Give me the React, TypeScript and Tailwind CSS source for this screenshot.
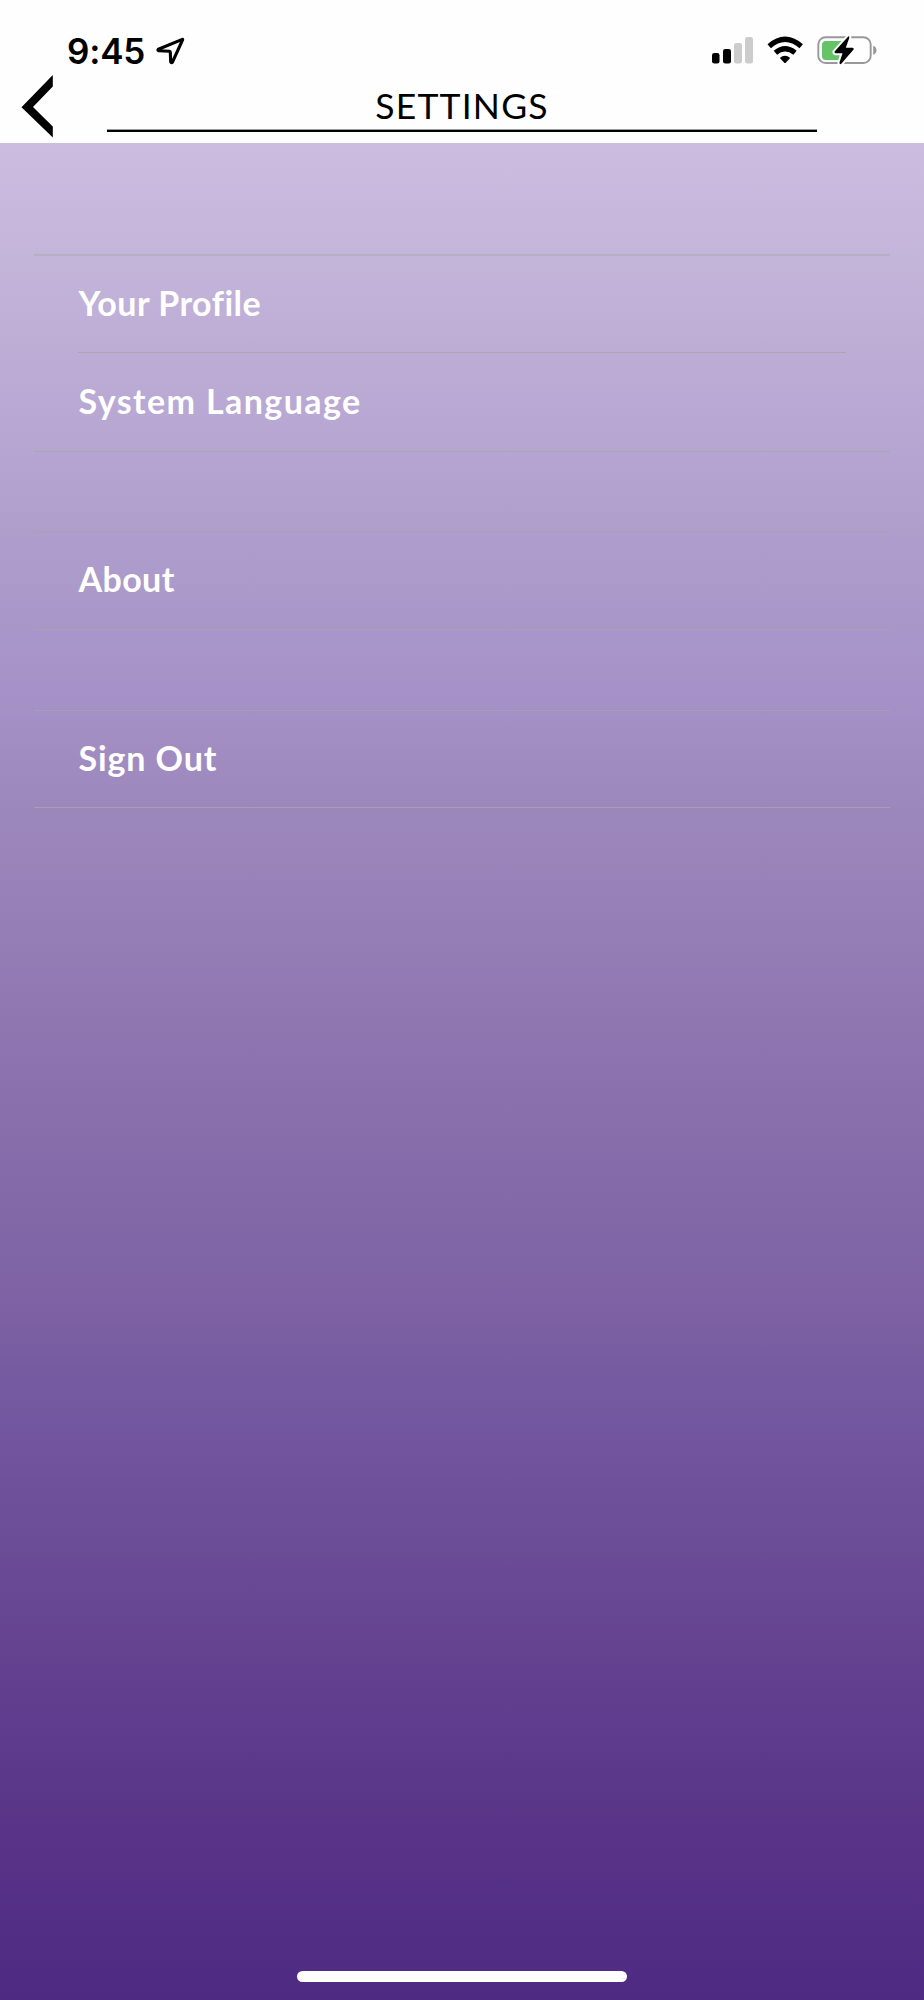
import React from "react";

function StatusBar() {
  return (
    <div className="flex h-[75px] items-start justify-between pr-[47px] pl-[67px]">
      <div className="flex pt-[30px]">
        <span className="w-[89px] whitespace-nowrap font-['Inter',sans-serif] text-[35px] leading-[42px] font-semibold tracking-[-0.2px]">9:45</span>
        <svg className="mt-[6px] h-[30px] w-[30px]" viewBox="156 36 30 30" fill="none">
          <path d="M182.3 39.4 158.4 49.2Q157.3 50.3 158.7 50.8L169.5 51.2Q170.3 51.3 170.3 52.2L170.7 61.9Q171.4 63.6 172.5 62L182.6 39.8Q182.8 39 182.3 39.4Z" stroke="#000" strokeWidth="3.1" strokeLinejoin="round" />
        </svg>
      </div>
      <svg className="mt-[35px] h-[32px] w-[167px]" viewBox="710 35 167 32" fill="none">
        <rect x="712" y="53" width="7.5" height="10.5" rx="2.3" fill="#000" />
        <rect x="723" y="49" width="8" height="14.5" rx="2.3" fill="#000" />
        <rect x="734" y="43" width="8" height="20.5" rx="2.3" fill="#ccc" />
        <rect x="745" y="37" width="8" height="26.5" rx="2.3" fill="#ccc" />
        <path d="M769.2 46.2Q785 32.3 801.2 46.2" stroke="#000" strokeWidth="5.2" />
        <path d="M775.4 52.8Q785 44.8 795 52.8" stroke="#000" strokeWidth="5.2" />
        <path d="M779.8 58Q785 53.4 790.2 58L786 62.6Q785 63.6 784 62.6Z" fill="#000" />
        <rect x="818.3" y="37.3" width="52.4" height="25.7" rx="7.3" stroke="#999" strokeWidth="1.9" />
        <path d="M873.2 45.8Q876.5 47 876.5 50.2T873.2 54.8Z" fill="#999" />
        <rect x="822" y="41" width="24" height="19" rx="4" fill="#65c466" />
        <path d="M848.2 36.5 834.6 51.6Q834 53 835.6 53.2H842.5L839.4 62.8Q839.8 65 841.5 63.6L853.6 49.4Q854.2 47.9 852.5 47.7H845.8L849.3 37.8Q849.4 35.8 848.2 36.5Z" stroke="#fff" strokeWidth="4" strokeLinejoin="round" />
        <path d="M848.2 36.5 834.6 51.6Q834 53 835.6 53.2H842.5L839.4 62.8Q839.8 65 841.5 63.6L853.6 49.4Q854.2 47.9 852.5 47.7H845.8L849.3 37.8Q849.4 35.8 848.2 36.5Z" fill="#000" />
      </svg>
    </div>
  );
}

function Header() {
  return (
    <header className="h-[143px] bg-[#fefefe] text-black">
      <StatusBar />
      <div className="flex">
        <button className="ml-[21px] w-[86px]" aria-label="Back">
          <svg className="h-[63px] w-[33px]" viewBox="21 75 33 63">
            <path d="M52.8 75V86.5L33 107 52.8 126.5V137.5L21.5 107.3Z" fill="#000" />
          </svg>
        </button>
        <div className="flex h-[57px] w-[710px] justify-center border-b-2 border-black shadow-[inset_0_-1px_0_#999]">
          <h1 className="pt-[10px] font-['Lato',sans-serif] text-[35.5px] leading-[42px] font-normal tracking-[1.2px] whitespace-nowrap">SETTINGS</h1>
        </div>
      </div>
    </header>
  );
}

function Item({ children }: { children: React.ReactNode }) {
  return (
    <button className="flex h-[96px] w-full items-center pl-[44.5px] text-left font-['Lato',sans-serif] text-[34px] leading-[42px] font-bold whitespace-nowrap text-white">
      {children}
    </button>
  );
}

export default function App() {
  return (
    <div className="flex h-[2000px] w-[924px] flex-col overflow-hidden bg-[#4e2a82]">
      <Header />
      <main className="flex flex-1 flex-col bg-[linear-gradient(180deg,#cbbce0_0px,#c4b5da_110px,#b8a8d3_270px,#ab9aca_440px,#a691c8_550px,#9d88bd_664px,#8c72ae_930px,#7c60a3_1180px,#7458a0_1260px,#664592_1480px,#593488_1680px,#4e2a82_1857px)] px-[34px]">
        <section className="mt-[111px] h-[198px] border-t-2 border-b border-t-[#b5b0c3] border-b-[#aaa6b0]">
          <Item><span className="pb-[2px] tracking-[0.5px]">Your Profile</span></Item>
          <div className="mx-[44px] h-px bg-[#aaa8ae]" />
          <Item><span className="tracking-[1.4px]">System Language</span></Item>
        </section>
        <section className="mt-[79px] h-[99px] border-y border-[#a8a2af]">
          <Item><span className="pb-[2px] tracking-[0.4px]">About</span></Item>
        </section>
        <section className="mt-[80px] h-[98px] border-y border-[#a69fad]">
          <Item><span className="pb-[2px] tracking-[0.9px]">Sign Out</span></Item>
        </section>
        <div className="mt-auto mb-[18px] h-[11px] w-[330px] self-center rounded-full bg-white" />
      </main>
    </div>
  );
}
